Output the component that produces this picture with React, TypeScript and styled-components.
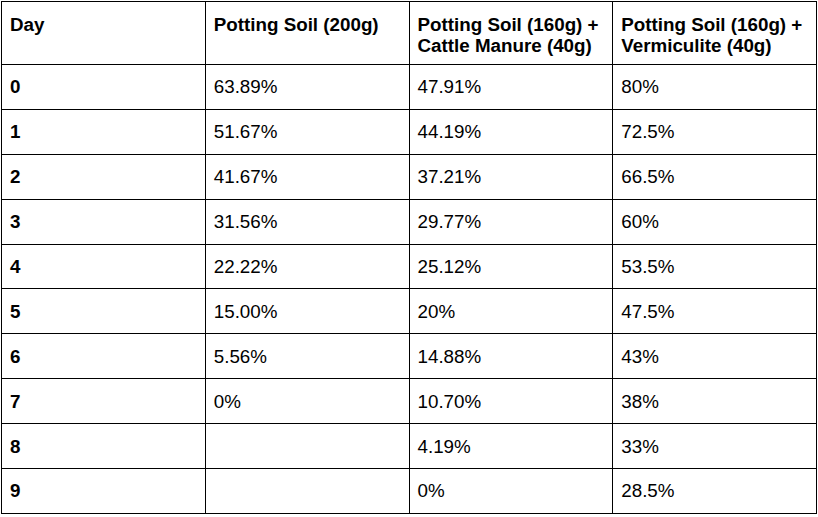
import React from "react";
import styled, { createGlobalStyle } from "styled-components";

const Global = createGlobalStyle`
  html, body { margin: 0; padding: 0; background: #fff; }
  body { font-family: "Liberation Sans", Arial, sans-serif; color: #000; }
`;

const Page = styled.div`
  padding: 1px 0 0 1px;
`;

const Table = styled.table`
  width: 816px;
  table-layout: fixed;
  border-collapse: collapse;
  font-size: 18.8px;
  line-height: 21px;
`;

const HeadCell = styled.th`
  border: 1px solid #000;
  height: 63px;
  padding: 12px 8px 0 8px;
  box-sizing: border-box;
  vertical-align: top;
  text-align: left;
  font-weight: 700;
`;

const Row = styled.tr`
  height: 44.9px;
`;

const Cell = styled.td<{ $bold?: boolean }>`
  border: 1px solid #000;
  padding: 0 8px;
  vertical-align: middle;
  text-align: left;
  font-weight: ${(p) => (p.$bold ? 700 : 400)};
`;

const headers = [
  "Day",
  "Potting Soil (200g)",
  "Potting Soil (160g) + Cattle Manure (40g)",
  "Potting Soil (160g) + Vermiculite (40g)",
];

const rows: [string, string, string, string][] = [
  ["0", "63.89%", "47.91%", "80%"],
  ["1", "51.67%", "44.19%", "72.5%"],
  ["2", "41.67%", "37.21%", "66.5%"],
  ["3", "31.56%", "29.77%", "60%"],
  ["4", "22.22%", "25.12%", "53.5%"],
  ["5", "15.00%", "20%", "47.5%"],
  ["6", "5.56%", "14.88%", "43%"],
  ["7", "0%", "10.70%", "38%"],
  ["8", "", "4.19%", "33%"],
  ["9", "", "0%", "28.5%"],
];

export default function App() {
  return (
    <Page>
      <Global />
      <Table>
        <thead>
          <tr>
            {headers.map((h) => (
              <HeadCell key={h}>{h}</HeadCell>
            ))}
          </tr>
        </thead>
        <tbody>
          {rows.map((r) => (
            <Row key={r[0]}>
              {r.map((c, i) => (
                <Cell key={i} $bold={i === 0}>
                  {c}
                </Cell>
              ))}
            </Row>
          ))}
        </tbody>
      </Table>
    </Page>
  );
}
